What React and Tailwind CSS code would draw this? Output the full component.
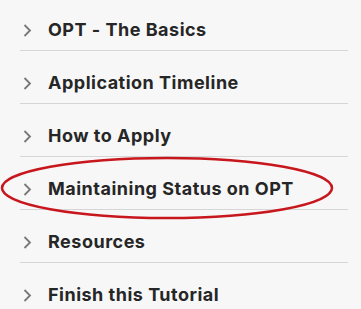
import React from "react";

const items = [
  "OPT - The Basics",
  "Application Timeline",
  "How to Apply",
  "Maintaining Status on OPT",
  "Resources",
  "Finish this Tutorial",
];

function Chevron() {
  return (
    <svg width="10" height="13" viewBox="0 0 10 13" className="shrink-0">
      <path d="M2.5 1 L8 6.5 L2.5 12" fill="none" stroke="#777777" strokeWidth="1.8" />
    </svg>
  );
}

export default function App() {
  return (
    <div className="relative h-[309px] w-[361px] overflow-hidden bg-[#f7f7f7] font-['Inter',sans-serif]">
      <ul className="-mt-[2px] pl-[20px] pr-[13px]">
        {items.map((label, i) => (
          <li
            key={label}
            className={
              "flex items-center gap-[16px] pl-[2px] pt-[22px] pb-[10px] " +
              (i < items.length - 1 ? "border-b border-[#d6d6d6]" : "")
            }
          >
            <Chevron />
            <span className="text-[18px] leading-[20px] font-bold tracking-[0.5px] text-[#262626]">{label}</span>
          </li>
        ))}
      </ul>
      <svg className="pointer-events-none absolute left-0 top-0" width="361" height="309">
        <ellipse cx="167" cy="188" rx="165" ry="30" fill="none" stroke="#c8161d" strokeWidth="2.5" />
      </svg>
    </div>
  );
}
